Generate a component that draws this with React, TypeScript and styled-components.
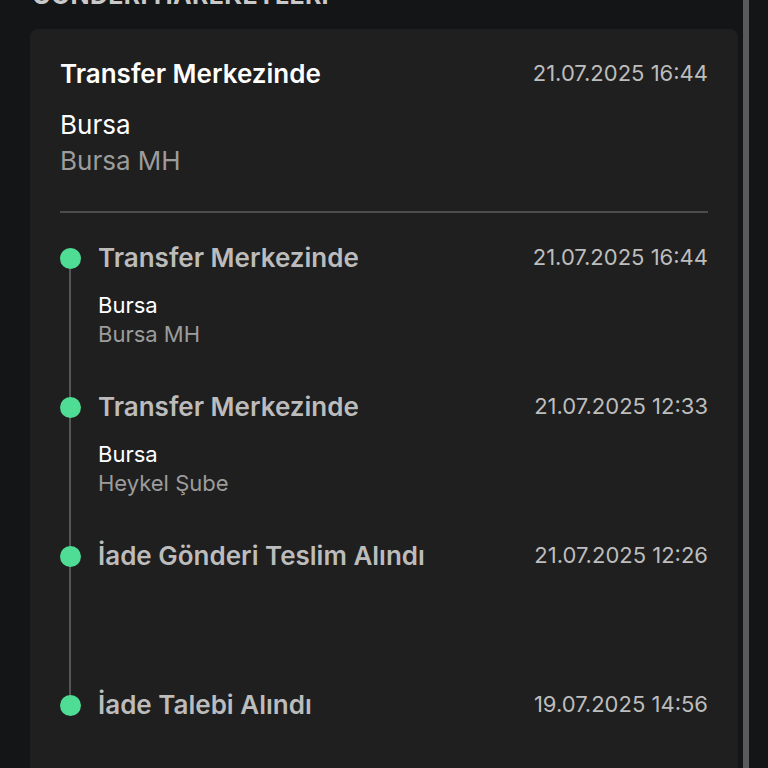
import styled, { createGlobalStyle } from "styled-components";

const Global = createGlobalStyle`
  html, body {
    margin: 0;
    padding: 0;
    background: #141517;
    overflow: hidden;
  }
  body {
    font-family: Inter, "Noto Sans", sans-serif;
  }
`;

const Page = styled.div`
  display: flex;
  flex-direction: row;
  height: 768px;
  overflow: hidden;
`;

const Main = styled.div`
  flex: 1;
  display: flex;
  flex-direction: column;
  padding-left: 30px;
  margin-top: -19px;
`;

const Heading = styled.h2`
  margin: 0 0 20px 2px;
  font-size: 25px;
  line-height: 28px;
  font-weight: 700;
  color: #c9c9c9;
  letter-spacing: 0.3px;
  text-transform: uppercase;
  white-space: nowrap;
`;

const Card = styled.div`
  background: #1f1f1f;
  border-radius: 8px;
  padding: 30px 30px 0 30px;
  flex: 1;
`;

const Scrollbar = styled.div`
  width: 6px;
  margin-left: 5px;
  margin-right: 19px;
  background: #5a5a5a;
`;

const Row = styled.div`
  display: flex;
  justify-content: space-between;
  align-items: flex-start;
`;

const Title = styled.div<{ $muted?: boolean }>`
  font-size: 26px;
  line-height: 30px;
  font-weight: 600;
  color: ${(p) => (p.$muted ? "#bcbcbc" : "#ffffff")};
`;

const DateText = styled.div`
  font-size: 22px;
  line-height: 26px;
  color: #bdbdbd;
  margin-top: 1px;
`;

const Lines = styled.div<{ $small?: boolean }>`
  margin-top: 18px;
  font-size: ${(p) => (p.$small ? "22px" : "26px")};
  line-height: ${(p) => (p.$small ? "29px" : "36px")};
`;

const Primary = styled.div`
  color: #ffffff;
`;

const Secondary = styled.div`
  color: #9c9c9c;
`;

const Divider = styled.hr`
  border: none;
  height: 2px;
  background: #4c4c4c;
  margin: 32px 0 30px 0;
`;

const Timeline = styled.div`
  display: flex;
  flex-direction: column;
`;

const Item = styled.div`
  display: flex;
  gap: 17px;
  min-height: 149px;
`;

const Marker = styled.div<{ $last?: boolean }>`
  position: relative;
  width: 21px;
  flex-shrink: 0;

  &::after {
    content: "";
    display: ${(p) => (p.$last ? "none" : "block")};
    position: absolute;
    left: 9px;
    top: 15px;
    bottom: -15px;
    width: 2px;
    background: #555555;
  }
`;

const Dot = styled.div`
  position: relative;
  z-index: 1;
  margin-top: 5px;
  width: 21px;
  height: 21px;
  border-radius: 50%;
  background: #4fdc94;
`;

const Body = styled.div`
  flex: 1;
`;

type Move = {
  title: string;
  date: string;
  city?: string;
  branch?: string;
};

const moves: Move[] = [
  { title: "Transfer Merkezinde", date: "21.07.2025 16:44", city: "Bursa", branch: "Bursa MH" },
  { title: "Transfer Merkezinde", date: "21.07.2025 12:33", city: "Bursa", branch: "Heykel Şube" },
  { title: "İade Gönderi Teslim Alındı", date: "21.07.2025 12:26" },
  { title: "İade Talebi Alındı", date: "19.07.2025 14:56" },
];

const App = () => {
  return (
    <>
      <Global />
      <Page>
        <Main>
          <Heading>Gönderi Hareketleri</Heading>
          <Card>
            <Row>
              <Title>Transfer Merkezinde</Title>
              <DateText>21.07.2025 16:44</DateText>
            </Row>
            <Lines>
              <Primary>Bursa</Primary>
              <Secondary>Bursa MH</Secondary>
            </Lines>
            <Divider />
            <Timeline>
              {moves.map((m, i) => (
                <Item key={i}>
                  <Marker $last={i === moves.length - 1}>
                    <Dot />
                  </Marker>
                  <Body>
                    <Row>
                      <Title $muted>{m.title}</Title>
                      <DateText>{m.date}</DateText>
                    </Row>
                    {m.city && (
                      <Lines $small>
                        <Primary>{m.city}</Primary>
                        <Secondary>{m.branch}</Secondary>
                      </Lines>
                    )}
                  </Body>
                </Item>
              ))}
            </Timeline>
          </Card>
        </Main>
        <Scrollbar />
      </Page>
    </>
  );
};

export default App;
